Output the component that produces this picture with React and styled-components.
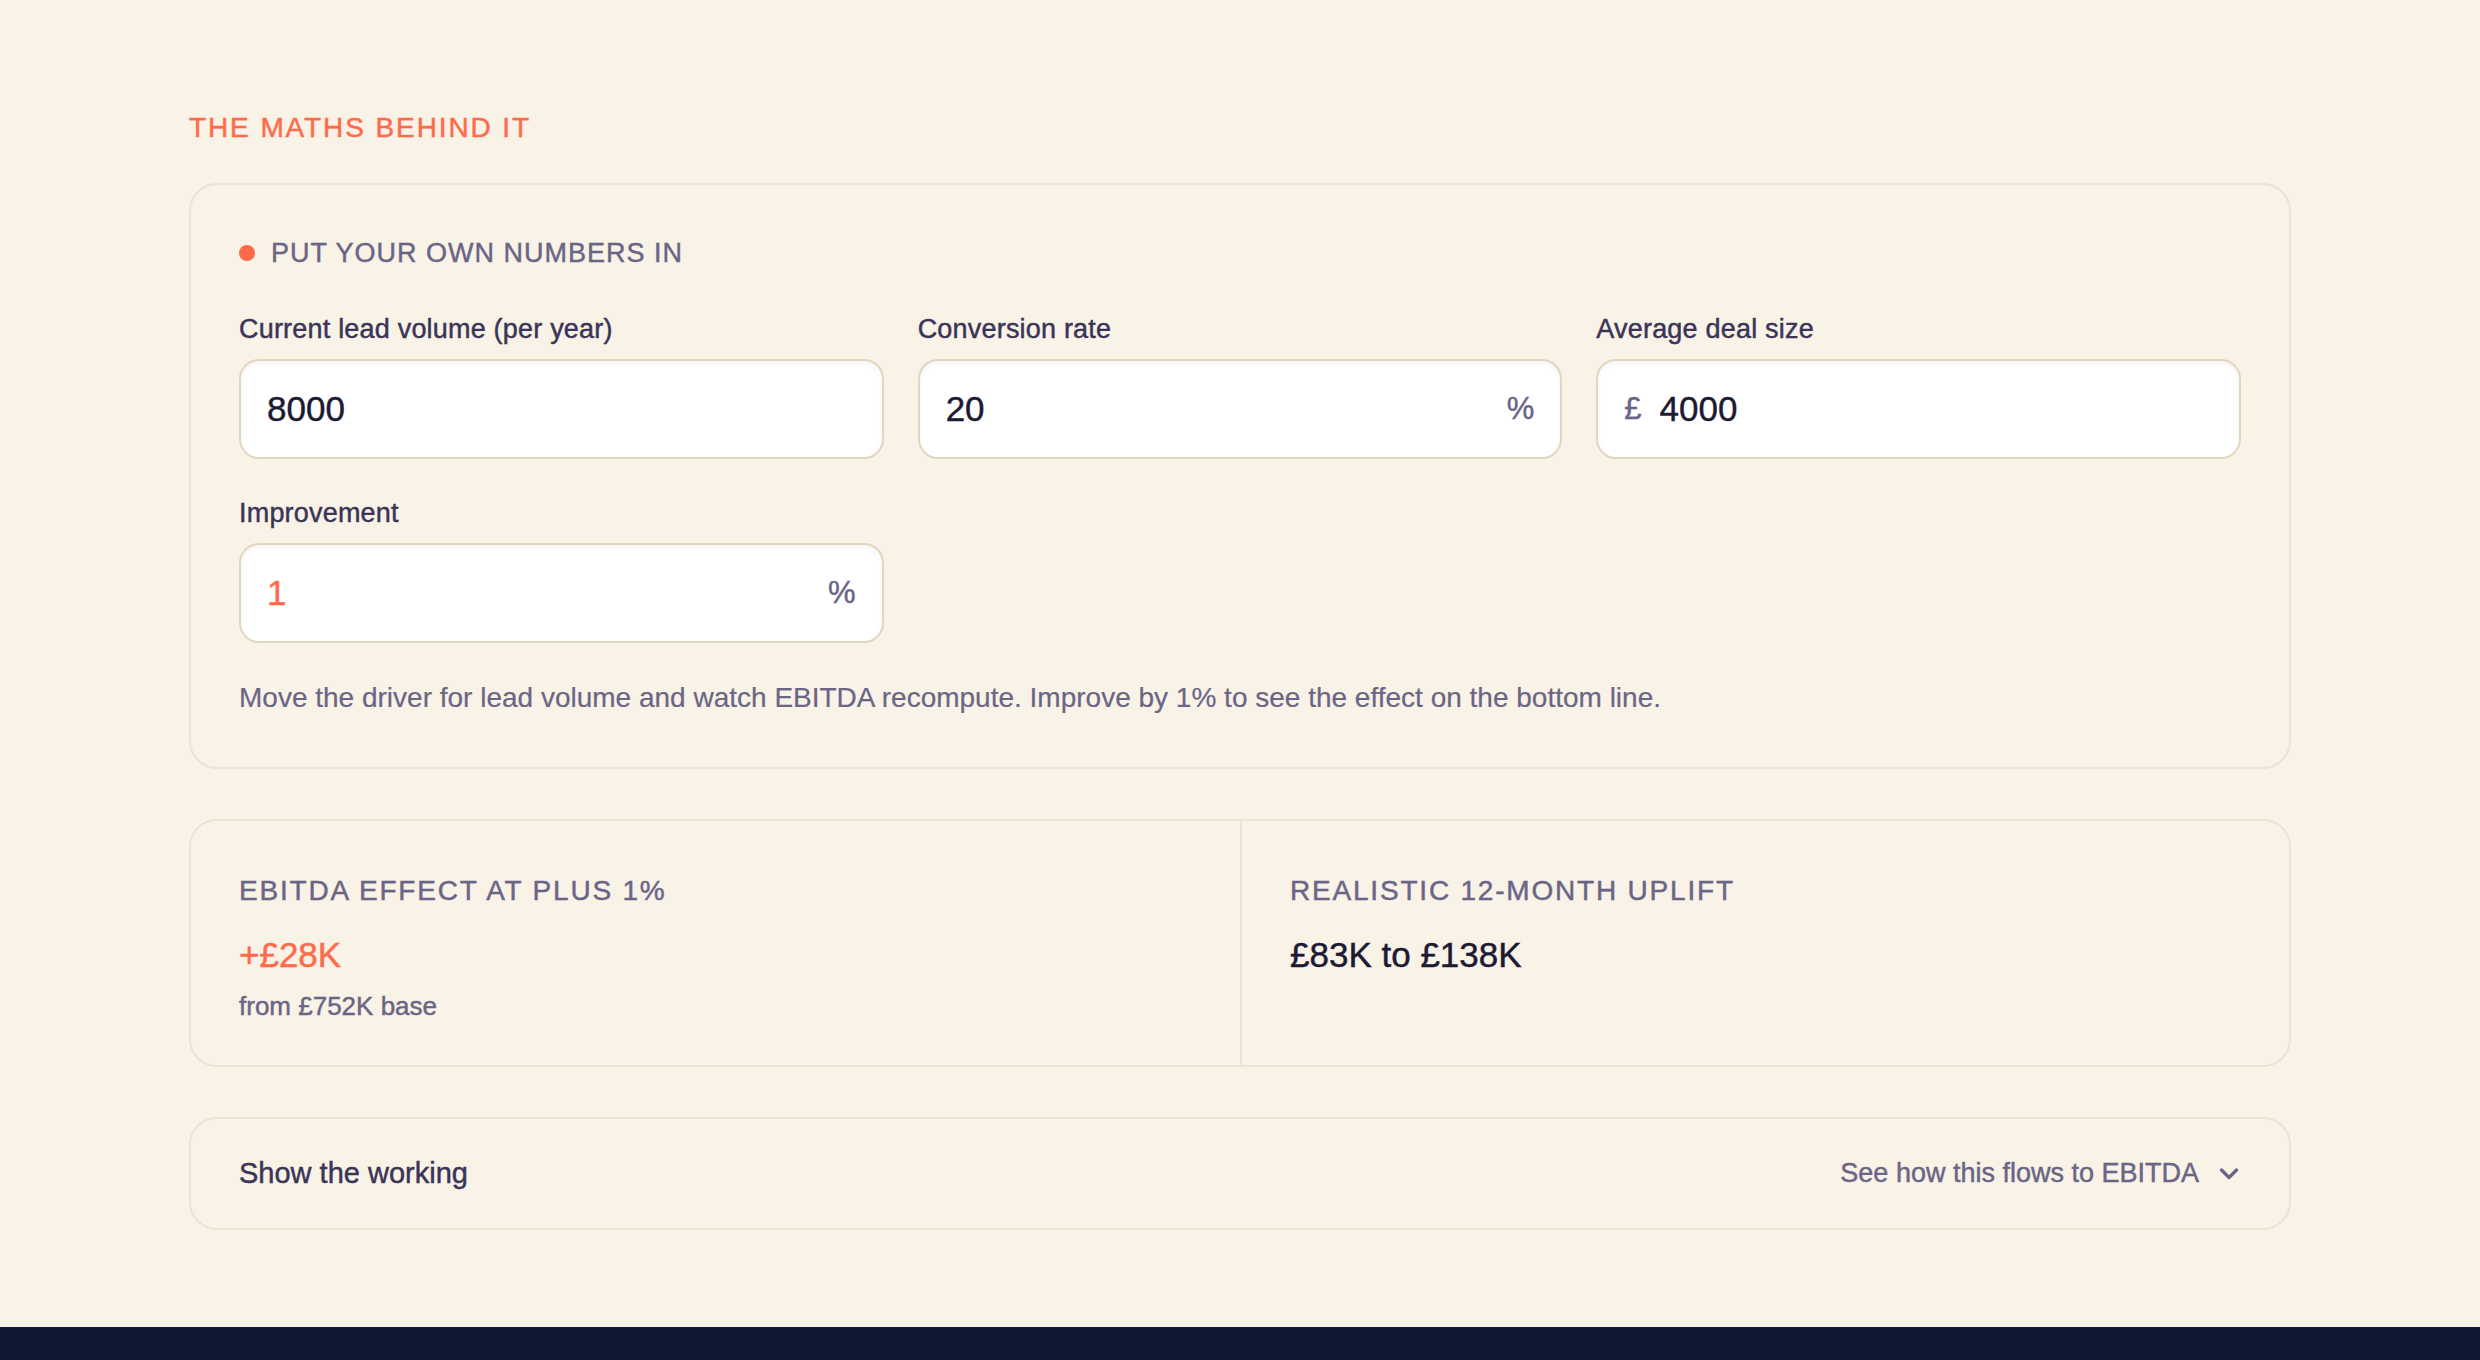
import React, { useState } from 'react';
import styled, { createGlobalStyle, css } from 'styled-components';

const GlobalStyle = createGlobalStyle`
  *,
  *::before,
  *::after {
    box-sizing: border-box;
  }

  body {
    margin: 0;
    background: #f8f2e7;
    font-family: 'Liberation Sans', Arial, Helvetica, sans-serif;
    color: #1c1a33;
  }
`;

// Liberation Sans has no 500 face, so thicken the regular strokes a touch
const medium = css`
  -webkit-text-stroke: 0.45px currentColor;
`;

const ChevronDown = () => (
  <svg width="20" height="12" viewBox="0 0 20 12" fill="none">
    <polyline
      points="2.5,2 10,9.5 17.5,2"
      stroke="currentColor"
      strokeWidth="3.2"
      strokeLinecap="round"
      strokeLinejoin="round"
    />
  </svg>
);

const App = () => {
  const [leads, setLeads] = useState('8000');
  const [rate, setRate] = useState('20');
  const [deal, setDeal] = useState('4000');
  const [improvement, setImprovement] = useState('1');

  return (
    <>
      <GlobalStyle />
      <Section>
        <Inner>
          <Eyebrow>THE MATHS BEHIND IT</Eyebrow>

          <Panel>
            <PanelTitle>
              <Dot />
              PUT YOUR OWN NUMBERS IN
            </PanelTitle>

            <Fields>
              <Field>
                <Label htmlFor="leads">Current lead volume (per year)</Label>
                <InputBox>
                  <Input
                    id="leads"
                    value={leads}
                    onChange={(e) => setLeads(e.target.value)}
                  />
                </InputBox>
              </Field>

              <Field>
                <Label htmlFor="rate">Conversion rate</Label>
                <InputBox>
                  <Input
                    id="rate"
                    value={rate}
                    onChange={(e) => setRate(e.target.value)}
                  />
                  <Affix>%</Affix>
                </InputBox>
              </Field>

              <Field>
                <Label htmlFor="deal">Average deal size</Label>
                <InputBox>
                  <Affix>£</Affix>
                  <Input
                    id="deal"
                    value={deal}
                    onChange={(e) => setDeal(e.target.value)}
                  />
                </InputBox>
              </Field>

              <Field>
                <Label htmlFor="improvement">Improvement</Label>
                <InputBox>
                  <Input
                    id="improvement"
                    $accent
                    value={improvement}
                    onChange={(e) => setImprovement(e.target.value)}
                  />
                  <Affix>%</Affix>
                </InputBox>
              </Field>
            </Fields>

            <Hint>
              Move the driver for lead volume and watch EBITDA recompute. Improve
              by 1% to see the effect on the bottom line.
            </Hint>
          </Panel>

          <Results>
            <Result>
              <ResultTitle>EBITDA EFFECT AT PLUS 1%</ResultTitle>
              <ResultValue $accent>+£28K</ResultValue>
              <ResultNote>from £752K base</ResultNote>
            </Result>
            <Result>
              <ResultTitle>REALISTIC 12-MONTH UPLIFT</ResultTitle>
              <ResultValue>£83K to £138K</ResultValue>
            </Result>
          </Results>

          <Working>
            <WorkingTitle>Show the working</WorkingTitle>
            <WorkingToggle type="button">
              See how this flows to EBITDA
              <ChevronDown />
            </WorkingToggle>
          </Working>
        </Inner>
      </Section>
      <Footer />
    </>
  );
};

const Section = styled.section`
  padding: 111px 0 97px;
`;

const Inner = styled.div`
  width: 2102px;
  margin: 0 auto;
`;

const Eyebrow = styled.h2`
  margin: 0 0 38px;
  font-size: 28px;
  line-height: 34px;
  font-weight: 400;
  letter-spacing: 1.9px;
  color: #ff6b4a;
  ${medium}
`;

const Panel = styled.div`
  border: 2px solid #ebe3d4;
  border-radius: 28px;
  padding: 52px 48px;
`;

const PanelTitle = styled.div`
  display: flex;
  align-items: center;
  gap: 16px;
  font-size: 27px;
  line-height: 32px;
  letter-spacing: 1px;
  color: #6b6585;
  ${medium}
`;

const Dot = styled.span`
  width: 16px;
  height: 16px;
  border-radius: 50%;
  background: #ff6b4a;
`;

const Fields = styled.div`
  display: grid;
  grid-template-columns: repeat(3, 1fr);
  column-gap: 34px;
  row-gap: 38px;
  margin-top: 44px;
`;

const Field = styled.div`
  display: flex;
  flex-direction: column;
`;

const Label = styled.label`
  display: block;
  margin-bottom: 14px;
  font-size: 27px;
  line-height: 32px;
  letter-spacing: 0.2px;
  color: #3a3457;
  ${medium}
`;

const InputBox = styled.div`
  display: flex;
  align-items: center;
  gap: 18px;
  height: 100px;
  padding: 0 26px;
  background: #ffffff;
  border: 2px solid #e2d6bf;
  border-radius: 20px;
  box-shadow: inset 0 3px 5px rgba(60, 40, 10, 0.05);
`;

const Input = styled.input`
  flex: 1;
  min-width: 0;
  border: none;
  outline: none;
  padding: 0;
  background: transparent;
  font-family: inherit;
  font-size: 35px;
  color: ${(p) => (p.$accent ? '#ff6b4a' : '#1c1a33')};
  ${medium}
`;

const Affix = styled.span`
  font-size: 31px;
  color: #6b6585;
  ${medium}
`;

const Hint = styled.p`
  margin: 38px 0 0;
  font-size: 28px;
  line-height: 34px;
  color: #6b6585;
  -webkit-text-stroke: 0.2px currentColor;
`;

const Results = styled.div`
  display: grid;
  grid-template-columns: 1fr 1fr;
  margin-top: 50px;
  border: 2px solid #ebe3d4;
  border-radius: 28px;
`;

const Result = styled.div`
  padding: 53px 48px 43px;

  & + & {
    border-left: 2px solid #ebe3d4;
  }
`;

const ResultTitle = styled.div`
  font-size: 28px;
  line-height: 34px;
  letter-spacing: 1.8px;
  color: #6b6585;
  ${medium}
`;

const ResultValue = styled.div`
  margin-top: 26px;
  font-size: 35px;
  line-height: 42px;
  color: ${(p) => (p.$accent ? '#ff6b4a' : '#1c1a33')};
  ${medium}
`;

const ResultNote = styled.div`
  margin-top: 14px;
  font-size: 26px;
  line-height: 32px;
  color: #6b6585;
  ${medium}
`;

const Working = styled.div`
  display: flex;
  align-items: center;
  justify-content: space-between;
  margin-top: 50px;
  padding: 38px 50px 38px 48px;
  border: 2px solid #ebe3d4;
  border-radius: 28px;
`;

const WorkingTitle = styled.div`
  font-size: 29px;
  line-height: 33px;
  color: #3a3457;
  ${medium}
`;

const WorkingToggle = styled.button`
  display: flex;
  align-items: center;
  gap: 20px;
  padding: 0;
  border: none;
  background: none;
  cursor: pointer;
  font-family: inherit;
  font-size: 27px;
  line-height: 33px;
  color: #6b6585;
  ${medium}
`;

const Footer = styled.footer`
  height: 240px;
  background: #0f1830;
`;

export default App;
